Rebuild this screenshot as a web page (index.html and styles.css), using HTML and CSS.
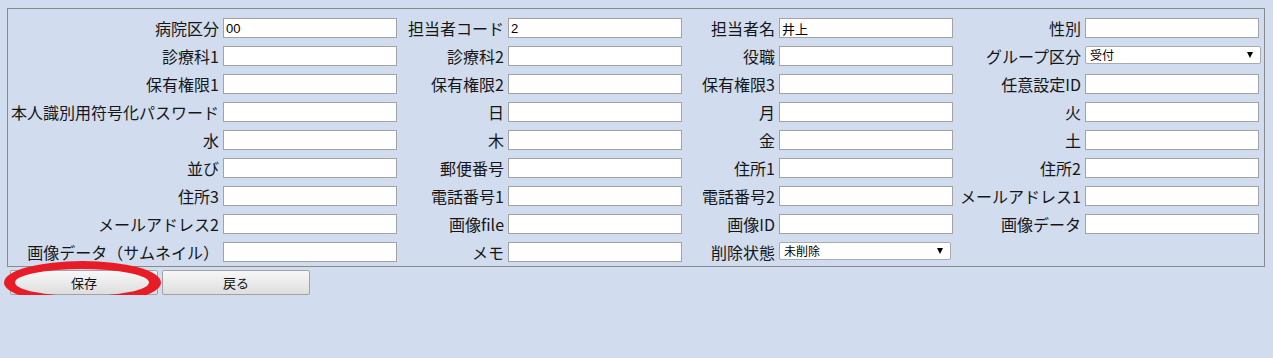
FILE: index.html
```html
<!DOCTYPE html>
<html lang="ja">
<head>
    <meta charset="UTF-8">
    <title>担当者登録</title>
    <link rel="stylesheet" href="styles.css">
</head>
<body>
    <div class="form-box">
        <div class="form-grid">
            <!-- 1行目 -->
            <label class="lbl">病院区分</label><div class="fld"><input class="txt" type="text" value="00"></div>
            <label class="lbl">担当者コード</label><div class="fld"><input class="txt" type="text" value="2"></div>
            <label class="lbl">担当者名</label><div class="fld"><input class="txt" type="text" value="井上"></div>
            <label class="lbl">性別</label><div class="fld"><input class="txt" type="text"></div>
            <!-- 2行目 -->
            <label class="lbl">診療科1</label><div class="fld"><input class="txt" type="text"></div>
            <label class="lbl">診療科2</label><div class="fld"><input class="txt" type="text"></div>
            <label class="lbl">役職</label><div class="fld"><input class="txt" type="text"></div>
            <label class="lbl">グループ区分</label><div class="fld"><span class="sel-wrap"><select class="sel"><option>受付</option></select></span></div>
            <!-- 3行目 -->
            <label class="lbl">保有権限1</label><div class="fld"><input class="txt" type="text"></div>
            <label class="lbl">保有権限2</label><div class="fld"><input class="txt" type="text"></div>
            <label class="lbl">保有権限3</label><div class="fld"><input class="txt" type="text"></div>
            <label class="lbl">任意設定ID</label><div class="fld"><input class="txt" type="text"></div>
            <!-- 4行目 -->
            <label class="lbl">本人識別用符号化パスワード</label><div class="fld"><input class="txt" type="text"></div>
            <label class="lbl">日</label><div class="fld"><input class="txt" type="text"></div>
            <label class="lbl">月</label><div class="fld"><input class="txt" type="text"></div>
            <label class="lbl">火</label><div class="fld"><input class="txt" type="text"></div>
            <!-- 5行目 -->
            <label class="lbl">水</label><div class="fld"><input class="txt" type="text"></div>
            <label class="lbl">木</label><div class="fld"><input class="txt" type="text"></div>
            <label class="lbl">金</label><div class="fld"><input class="txt" type="text"></div>
            <label class="lbl">土</label><div class="fld"><input class="txt" type="text"></div>
            <!-- 6行目 -->
            <label class="lbl">並び</label><div class="fld"><input class="txt" type="text"></div>
            <label class="lbl">郵便番号</label><div class="fld"><input class="txt" type="text"></div>
            <label class="lbl">住所1</label><div class="fld"><input class="txt" type="text"></div>
            <label class="lbl">住所2</label><div class="fld"><input class="txt" type="text"></div>
            <!-- 7行目 -->
            <label class="lbl">住所3</label><div class="fld"><input class="txt" type="text"></div>
            <label class="lbl">電話番号1</label><div class="fld"><input class="txt" type="text"></div>
            <label class="lbl">電話番号2</label><div class="fld"><input class="txt" type="text"></div>
            <label class="lbl">メールアドレス1</label><div class="fld"><input class="txt" type="text"></div>
            <!-- 8行目 -->
            <label class="lbl">メールアドレス2</label><div class="fld"><input class="txt" type="text"></div>
            <label class="lbl">画像file</label><div class="fld"><input class="txt" type="text"></div>
            <label class="lbl">画像ID</label><div class="fld"><input class="txt" type="text"></div>
            <label class="lbl">画像データ</label><div class="fld"><input class="txt" type="text"></div>
            <!-- 9行目 -->
            <label class="lbl">画像データ（サムネイル）</label><div class="fld"><input class="txt" type="text"></div>
            <label class="lbl">メモ</label><div class="fld"><input class="txt" type="text"></div>
            <label class="lbl">削除状態</label><div class="fld"><span class="sel-wrap"><select class="sel sel-short"><option>未削除</option></select></span></div>
            <div class="lbl"></div><div class="fld"></div>
        </div>
    </div>
    <div class="buttons">
        <button class="btn" type="button">保存</button>
        <button class="btn" type="button">戻る</button>
        <!-- 赤丸の注記 -->
        <svg class="mark" width="170" height="52" viewBox="0 0 170 52">
            <path fill="#e81c26" fill-rule="evenodd" d="M4,25.5 a78.5,21.5 0 1,0 157,0 a78.5,21.5 0 1,0 -157,0 Z M15,25.5 a67,13.5 0 1,0 134,0 a67,13.5 0 1,0 -134,0 Z"></path>
        </svg>
    </div>
</body>
</html>
```

FILE: styles.css
```css
body {
    margin: 0;
    background-color: #d1dcee;
    font-family: "Noto Sans CJK JP", "Liberation Sans", sans-serif;
    color: #161616;
}
.form-box {
    margin: 8px 8px 0 7px;
    border: 1px solid #8a8a8a;
    padding: 9px 0 4px 0;
}
.form-grid {
    display: grid;
    grid-template-columns: 215px 175px 110px 175px 96px 174px 132px 177px;
    grid-auto-rows: 20px;
    row-gap: 8px;
}
.lbl {
    font-size: 16px;
    line-height: 20px;
    text-align: right;
    padding-right: 4px;
    white-space: nowrap;
}
.fld {
    display: flex;
    align-items: flex-start;
}
.txt {
    box-sizing: border-box;
    width: 174px;
    height: 20px;
    margin: 0;
    padding: 0 2px;
    border: 1px solid #a3a3a3;
    background: #fff;
    font-family: "Liberation Sans", "Noto Sans CJK JP", sans-serif;
    font-size: 13px;
    color: #000;
    outline: none;
}
.sel-wrap {
    position: relative;
    display: flex;
}
.sel-wrap::after {
    content: "";
    position: absolute;
    right: 8px;
    top: 6px;
    border-left: 3px solid transparent;
    border-right: 3px solid transparent;
    border-top: 6px solid #000;
    pointer-events: none;
}
.sel {
    appearance: none;
    -webkit-appearance: none;
    display: block;
    box-sizing: border-box;
    width: 176px;
    height: 18px;
    margin: 0;
    padding: 0 4px;
    border: 1px solid #ababab;
    border-radius: 2px;
    background: #fff;
    font-family: "Noto Sans CJK JP", sans-serif;
    font-size: 12px;
    line-height: 16px;
    color: #000;
}
.sel-short {
    width: 172px;
}
.buttons {
    position: relative;
    display: flex;
    gap: 4px;
    margin: 3px 0 0 10px;
}
.btn {
    box-sizing: border-box;
    width: 148px;
    height: 25px;
    margin: 0;
    padding: 0;
    border: 1px solid #a2a2a2;
    border-radius: 2px;
    background: linear-gradient(#f7f7f7, #dedede);
    font-family: "Noto Sans CJK JP", sans-serif;
    font-size: 13px;
    color: #111;
}
.mark {
    position: absolute;
    left: -10px;
    top: -13px;
}
```
